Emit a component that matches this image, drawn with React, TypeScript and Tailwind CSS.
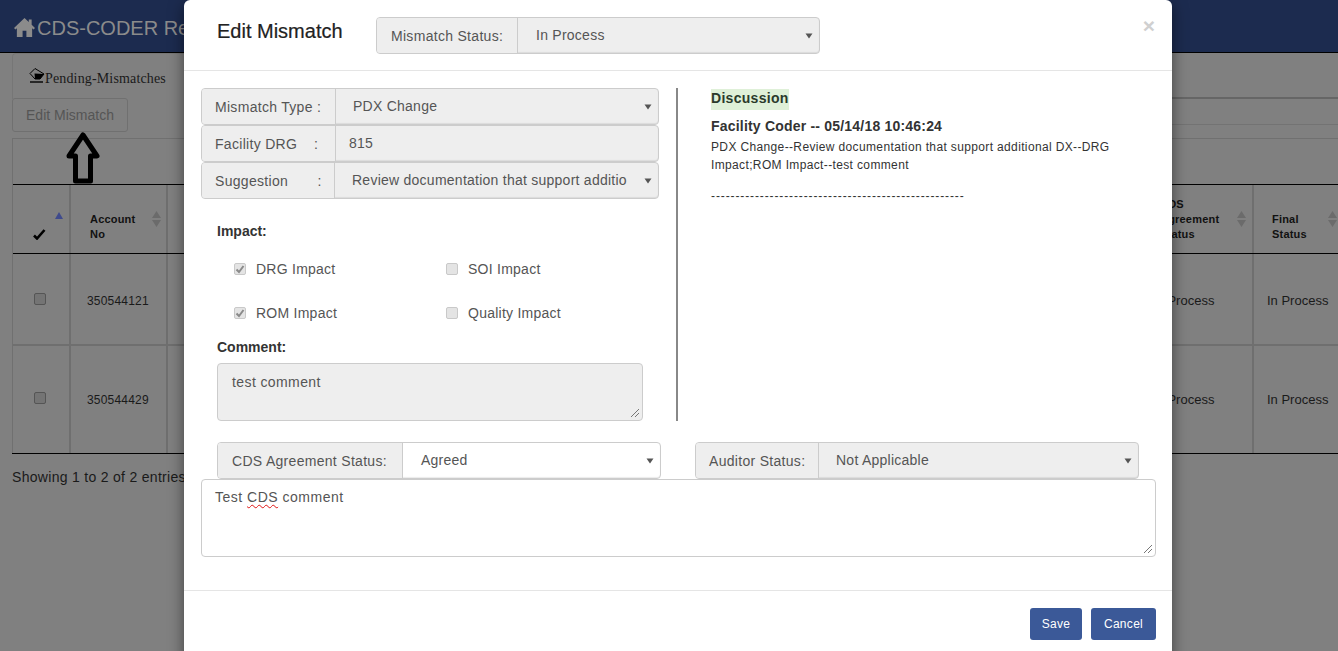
import React from "react";

const Arrow = () => (
  <svg width="8" height="6" viewBox="0 0 8 6" className="shrink-0">
    <path d="M0.5 0.5H7.5L4 5.5Z" fill="#555" />
  </svg>
);

const Grip = () => (
  <svg width="10" height="10" viewBox="0 0 10 10" className="absolute right-[2px] bottom-[2px]">
    <path d="M9 1L1 9M9 5L5 9" stroke="#777" strokeWidth="1" />
  </svg>
);

function Group({
  label,
  value,
  addon,
  select = true,
  active = false,
  pad = 18,
}: {
  label: string;
  value: string;
  addon: string;
  select?: boolean;
  active?: boolean;
  pad?: number;
}) {
  return (
    <div className={`flex h-[37px] w-full rounded-[4px] border border-[#ccc] overflow-hidden shadow-[inset_0_-1px_1px_rgba(0,0,0,0.08)] ${active ? "bg-white" : "bg-[#eee]"}`}>
      <div className={`${addon} shrink-0 bg-[#eee] border-r border-[#ccc] flex items-center text-[14px] tracking-[0.3px] text-[#555] whitespace-pre`}>
        <span className="mt-[2px]">{label}</span>
      </div>
      <div className="flex-1 min-w-0 flex items-center justify-between pr-[6px]" style={{ paddingLeft: pad }}>
        <span className="whitespace-nowrap text-[14px] tracking-[0.25px] text-[#555] -mt-[1px]">{value}</span>
        {select && <Arrow />}
      </div>
    </div>
  );
}

function Check({ checked, label, w }: { checked: boolean; label: string; w: string }) {
  return (
    <div className={`${w} flex items-center`}>
      <span className="w-[12px] h-[12px] rounded-[2px] bg-[#e4e4e4] border border-[#c9c9c9] flex items-center justify-center">
        {checked && (
          <svg width="10" height="10" viewBox="0 0 10 10">
            <path d="M1.5 5.5L4 8L8.5 2" stroke="#8a8a8a" strokeWidth="2" fill="none" />
          </svg>
        )}
      </span>
      <span className="ml-[10px] text-[14px] tracking-[0.25px] text-[#555]">{label}</span>
    </div>
  );
}

const Sort = () => (
  <svg width="9" height="16" viewBox="0 0 9 16" className="shrink-0">
    <path d="M4.5 0L9 7H0Z M0 9H9L4.5 16Z" fill="#6b6b6b" />
  </svg>
);

const cols = "grid grid-cols-[58px_97px_967px_119px_85px]";
const cell = "border-r-2 border-[#6f6f6f] flex items-center";
const th = "self-end mb-[11px] text-[11px] leading-[15px] font-bold tracking-[0.2px] text-[#111]";

function DataRow({ account, h, first }: { account: string; h: string; first?: boolean }) {
  const pad = first ? "pt-[4px]" : "";
  return (
    <div className={`${cols} ${h} ${first ? "border-b-2 border-[#6f6f6f]" : ""}`}>
      <div className={`${cell} ${pad} justify-center`}>
        <span className="w-[12px] h-[12px] rounded-[2px] border border-[#555] bg-[#747474] -mt-[4px] -ml-[2px]" />
      </div>
      <div className={`${cell} ${pad} pl-[16px] text-[12px] tracking-[0.2px] text-[#1a1a1a]`}>{account}</div>
      <div className={cell} />
      <div className={`${cell} ${pad} pl-[18px] text-[13px] text-[#1a1a1a]`}>In Process</div>
      <div className={`${pad} flex items-center pl-[13px] text-[13px] text-[#1a1a1a]`}>In Process</div>
    </div>
  );
}

export default function App() {
  return (
    <div className="relative w-[1338px] h-[651px] overflow-hidden bg-[#808080] font-['Liberation_Sans',Arial,sans-serif]">
      {/* page behind the dialog */}
      <header className="h-[53px] bg-[#1c2b4f] border-b border-black flex items-center pl-[13px] pt-[3px]">
        <svg width="23" height="21" viewBox="0 0 24 22">
          <path d="M12 1L1 11.5L2.5 13L4 11.7V21H10V14.5H14V21H20V11.7L21.5 13L23 11.5L19.5 8V2.5H16.5V5.2Z" fill="#8b8b8b" />
        </svg>
        <span className="ml-[1px] text-[20px] text-[#8b8b8b] whitespace-nowrap">CDS-CODER Re</span>
      </header>
      <div className="flex h-[46px] pl-[12px]">
        <div className="w-[172px] border-l border-t border-[#767676] rounded-tl-[4px] pl-[16px] pt-[13px] flex items-start">
          <svg width="17" height="17" viewBox="0 0 17 17" className="shrink-0">
            <path d="M1 6.5L6 1.5L15 7L11 12H6Z" fill="#808080" stroke="#000" strokeWidth="1" />
            <path d="M5.5 6.5L15 7L11 12H6Z" fill="#000" />
            <path d="M1 15H14" stroke="#000" strokeWidth="1.4" />
          </svg>
          <span className="-ml-[1px] font-['Liberation_Serif',serif] text-[14px] tracking-[0.15px] text-[#1a1a1a] mt-[1px] whitespace-nowrap">Pending-Mismatches</span>
        </div>
        <div className="flex-1 border-b-2 border-[#666]" />
      </div>
      <div className="flex h-[39px] pl-[12px]">
        <div className="-mt-[1px] w-[116px] h-[34px] border border-[#707070] rounded-[3px] flex items-center justify-center text-[14px] text-[#555]">
          Edit Mismatch
        </div>
        <div className="ml-[56px] flex-1 h-[26px] border-b border-[#737373]" />
      </div>
      <div className="ml-[12px] border-t border-l border-[#707070]">
        <div className="h-[46px] border-b border-black" />
        <div className={`${cols} h-[69px] border-b border-black`}>
          <div className={`${cell} relative`}>
            <svg width="8" height="7" viewBox="0 0 8 7" className="absolute left-[42px] top-[27px]">
              <path d="M4 0L8 7H0Z" fill="#3f4a8c" />
            </svg>
            <svg width="13" height="11" viewBox="0 0 13 11" className="absolute left-[20px] top-[44px]">
              <path d="M1 6.5L4 9.5L11.5 1" stroke="#000" strokeWidth="2.6" fill="none" />
            </svg>
          </div>
          <div className={`${cell} pl-[19px] pr-[5px] justify-between`}>
            <span className={th}>Account<br />No</span>
            <Sort />
          </div>
          <div className={cell} />
          <div className={`${cell} pl-[25px] pr-[6px] justify-between`}>
            <span className={th}>CDS<br />Agreement<br />Status</span>
            <Sort />
          </div>
          <div className="flex items-center pl-[18px] pr-[2px] justify-between">
            <span className={th}>Final<br />Status</span>
            <Sort />
          </div>
        </div>
        <DataRow account="350544121" h="h-[92px]" first />
        <DataRow account="350544429" h="h-[107px]" />
      </div>
      <div className="ml-[12px] border-t border-black pt-[13px] text-[14px] tracking-[0.3px] text-[#1a1a1a] whitespace-nowrap">Showing 1 to 2 of 2 entries</div>

      {/* dialog */}
      <div className="absolute left-[184px] top-0 w-[988px] h-[700px] bg-white rounded-[6px] shadow-[0_5px_15px_rgba(0,0,0,0.5)]">
        <div className="h-[71px] border-b border-[#e5e5e5] flex items-start pt-[17px] pl-[33px] pr-[17px]">
          <h4 className="w-[159px] text-[20px] leading-[28px] text-[#222] [-webkit-text-stroke:0.2px_#222]">Edit Mismatch</h4>
          <div className="w-[444px]">
            <Group label="Mismatch Status:" value="In Process" addon="w-[141px] pl-[14px]" />
          </div>
          <span className="ml-auto -mt-[2px] text-[21px] leading-[21px] font-bold text-[#d0d0d0]">×</span>
        </div>

        <div className="flex pt-[17px] pl-[17px]">
          <div className="w-[458px] h-[333px]">
            <Group label="Mismatch Type :" value="PDX Change" addon="w-[134px] pl-[13px]" pad={17} />
            <Group label="Facility DRG    :" value="815" addon="w-[134px] pl-[13px]" select={false} pad={13} />
            <Group label="Suggestion       :" value="Review documentation that support additio" addon="w-[133px] pl-[13px]" pad={17} />
            <div className="pl-[16px]">
              <div className="mt-[24px] text-[14px] leading-[16px] font-bold text-[#333]">Impact:</div>
              <div className="pl-[17px]">
                <div className="flex mt-[20px] h-[20px]">
                  <Check checked label="DRG Impact" w="w-[212px]" />
                  <Check checked={false} label="SOI Impact" w="w-[200px]" />
                </div>
                <div className="flex mt-[24px] h-[20px]">
                  <Check checked label="ROM Impact" w="w-[212px]" />
                  <Check checked={false} label="Quality Impact" w="w-[200px]" />
                </div>
              </div>
              <div className="mt-[16px] text-[14px] leading-[16px] font-bold text-[#333]">Comment:</div>
              <div className="relative mt-[8px] w-[426px] h-[58px] bg-[#eee] border border-[#ccc] rounded-[4px] px-[14px] pt-[9px] text-[14px] leading-[18px] tracking-[0.4px] text-[#555]">
                test comment
                <Grip />
              </div>
            </div>
          </div>
          <div className="ml-[17px] w-[2px] h-[333px] bg-[#888]" />
          <div className="pl-[33px] w-[440px]">
            <div className="w-fit mt-[1px] h-[21px] bg-[#dff0d8] text-[14px] leading-[19px] font-bold tracking-[0.3px] text-[#2b3a2b]">Discussion</div>
            <div className="mt-[7px] text-[14px] leading-[18px] font-bold tracking-[0.2px] text-[#333] whitespace-nowrap">Facility Coder -- 05/14/18 10:46:24</div>
            <div className="mt-[3px] text-[12px] leading-[18px] tracking-[0.36px] text-[#333] whitespace-nowrap">
              PDX Change--Review documentation that support additional DX--DRG
              <br />
              Impact;ROM Impact--test comment
            </div>
            <div className="mt-[13px] text-[12px] leading-[18px] tracking-[0.88px] text-[#333] whitespace-nowrap">
              ----------------------------------------------------
            </div>
          </div>
        </div>

        <div className="flex mt-[21px] pl-[33px] gap-[34px]">
          <div className="w-[444px]">
            <Group label="CDS Agreement Status:" value="Agreed" addon="w-[185px] pl-[14px]" active />
          </div>
          <div className="w-[444px]">
            <Group label="Auditor Status:" value="Not Applicable" addon="w-[123px] pl-[13px]" pad={17} />
          </div>
        </div>

        <div className="relative ml-[17px] w-[955px] h-[78px] border border-[#ccc] rounded-[4px] px-[13px] pt-[8px] text-[14px] leading-[18px] tracking-[0.5px] text-[#555]">
          Test <span className="underline decoration-wavy decoration-[#e01515] decoration-1 underline-offset-2">CDS</span> comment
          <Grip />
        </div>

        <div className="mt-[33px] border-t border-[#e5e5e5] pt-[17px] pr-[16px] flex justify-end gap-[9px]">
          <button className="w-[52px] h-[32px] rounded-[3px] bg-[#3b5998] text-white text-[12px] tracking-[0.3px]">Save</button>
          <button className="w-[65px] h-[32px] rounded-[3px] bg-[#3b5998] text-white text-[12px] tracking-[0.3px]">Cancel</button>
        </div>
      </div>

      {/* arrow annotation */}
      <svg width="34" height="52" viewBox="0 0 34 52" className="absolute left-[66px] top-[132px]">
        <path d="M17 3L31 24H24.5V49H9.5V24H3Z" fill="#808080" stroke="#000" strokeWidth="5" strokeLinejoin="round" />
      </svg>
    </div>
  );
}
